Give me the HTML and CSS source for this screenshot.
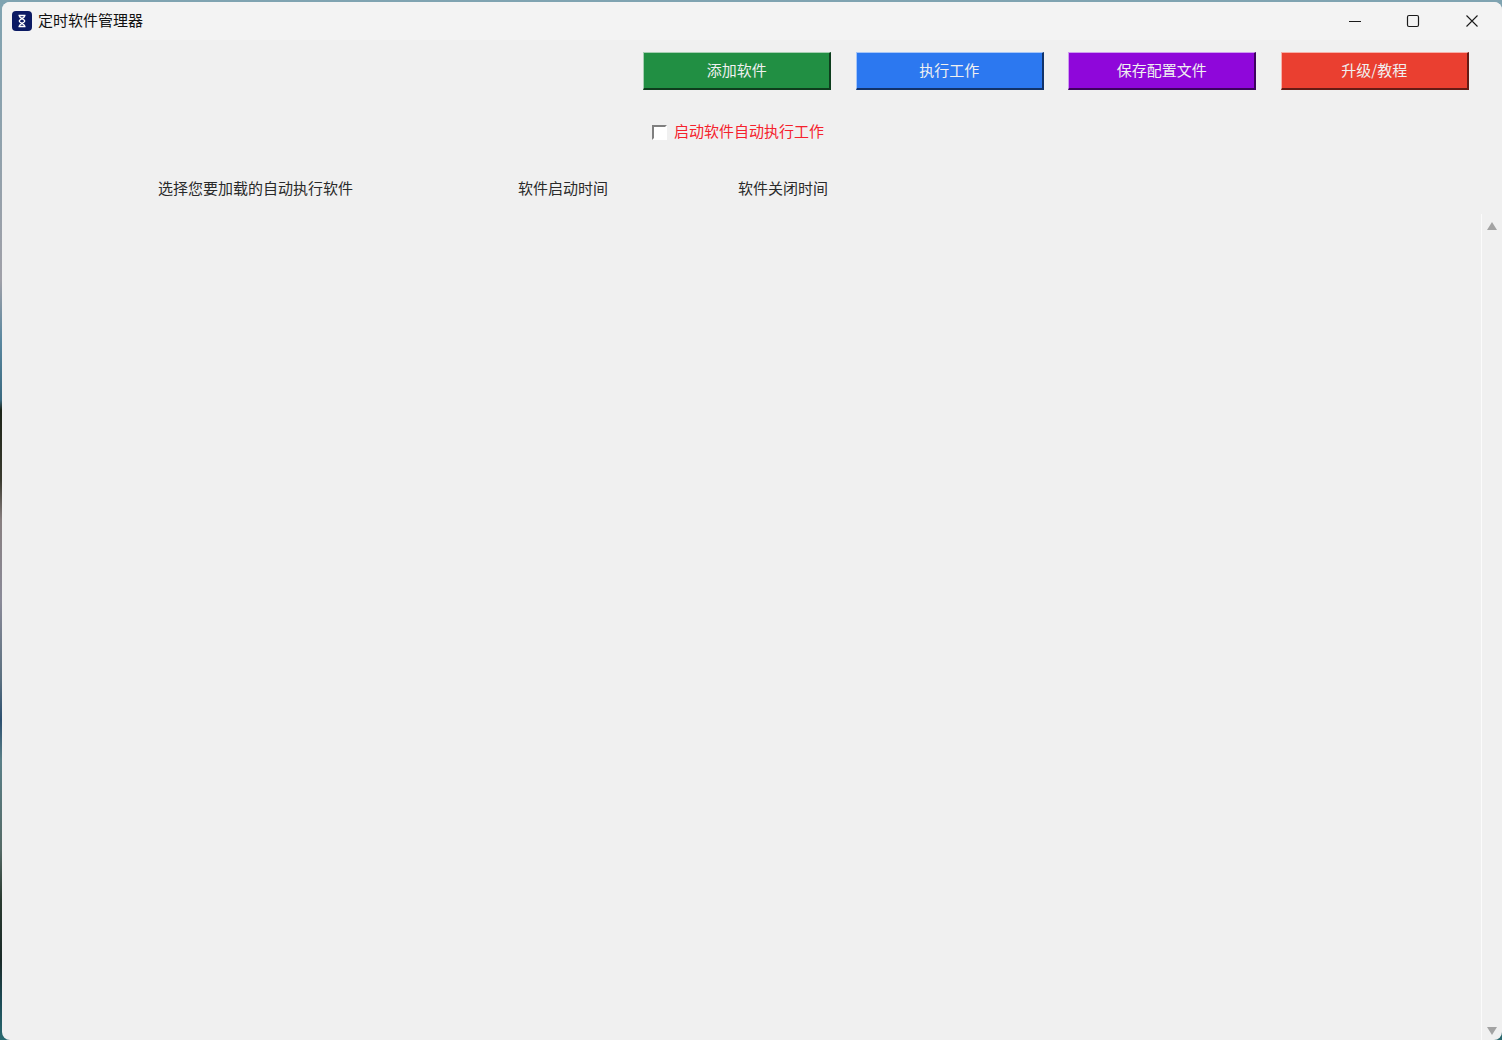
FILE: index.html
```html
<!DOCTYPE html>
<html lang="en">

<head>
    <meta charset="UTF-8">
    <meta name="viewport" content="width=device-width, initial-scale=1.0">
    <title>定时软件管理器</title>
    <link rel="stylesheet" href="styles.css">
</head>

<body>
<div class="window">
    <!-- Title bar -->
    <div class="titlebar">
        <div class="app-icon">
            <svg width="20" height="20" viewBox="0 0 20 20">
                <path d="M6.5 4.5h7M6.5 15.5h7M7.2 4.5c0 3 5.6 3.5 5.6 5.5s-5.6 2.5-5.6 5.5M12.8 4.5c0 3-5.6 3.5-5.6 5.5s5.6 2.5 5.6 5.5" fill="none" stroke="#fff" stroke-width="1.3"/>
            </svg>
        </div>
        <span class="app-title">定时软件管理器</span>
        <div class="win-controls">
            <svg class="win-btn" width="14" height="14" viewBox="0 0 14 14">
                <path d="M1 7.5h12" stroke="#1a1a1a" stroke-width="1" fill="none"/>
            </svg>
            <svg class="win-btn" width="14" height="14" viewBox="0 0 14 14">
                <rect x="1.5" y="1.5" width="11" height="11" rx="1.5" stroke="#1a1a1a" stroke-width="1.2" fill="none"/>
            </svg>
            <svg class="win-btn" width="14" height="14" viewBox="0 0 14 14">
                <path d="M1.5 1.5l11 11M12.5 1.5l-11 11" stroke="#1a1a1a" stroke-width="1.1" fill="none"/>
            </svg>
        </div>
    </div>

    <!-- Action buttons -->
    <div class="toolbar">
        <button class="action green">添加软件</button>
        <button class="action blue">执行工作</button>
        <button class="action purple">保存配置文件</button>
        <button class="action red">升级/教程</button>
    </div>

    <!-- Auto start option -->
    <div class="auto-row">
        <span class="check"></span>
        <span class="auto-label">启动软件自动执行工作</span>
    </div>

    <!-- Column headers -->
    <div class="headers">
        <span class="col-name">选择您要加载的自动执行软件</span>
        <span class="col-start">软件启动时间</span>
        <span class="col-stop">软件关闭时间</span>
    </div>

    <!-- Empty list with scrollbar -->
    <div class="list">
        <div class="list-body"></div>
        <div class="scrollbar">
            <svg width="12" height="8" viewBox="0 0 12 8"><path d="M6 0l5 8H1z" fill="#a3a3a3"/></svg>
            <svg width="12" height="8" viewBox="0 0 12 8"><path d="M1 0h10L6 8z" fill="#a3a3a3"/></svg>
        </div>
    </div>
</div>
</body>

</html>
```

FILE: styles.css
```css
body {
    margin: 0;
    height: 1040px;
    overflow: hidden;
    box-sizing: border-box;
    padding: 2px 0 0 2px;
    font-family: "Noto Sans CJK SC", sans-serif;
    font-size: 15px;
    line-height: 20px;
    color: #1f1f1f;
    background: linear-gradient(to bottom, #7fa3b1 0, #a0a0a8 280px, #5a88a0 340px, #3a6a80 400px, #1c2418 410px, #3a3a2e 480px, #887f80 520px, #8a8a98 600px, #5a7080 680px, #2c5070 720px, #5a8088 760px, #556a66 850px, #2a3a30 900px, #1a2a28 960px, #1c4a55 1000px, #2a6a70 1040px);
}

.window {
    height: 1038px;
    display: flex;
    flex-direction: column;
    background-color: #f0f0f0;
    border-radius: 8px;
    overflow: hidden;
}

.titlebar {
    flex: none;
    height: 38px;
    display: flex;
    align-items: center;
    background-color: #f3f3f3;
    padding-left: 10px;
}

.app-icon {
    width: 20px;
    height: 20px;
    border-radius: 4px;
    background-color: #0b1a63;
}

.app-title {
    margin-left: 6px;
    padding-bottom: 2px;
    color: #111;
}

.win-controls {
    margin-left: auto;
    display: flex;
    gap: 45px;
    padding-right: 23px;
}

.win-btn:first-child {
    margin-right: -1px;
}

.toolbar {
    flex: none;
    display: flex;
    justify-content: flex-end;
    gap: 24.5px;
    padding: 12px 33.25px 0 0;
}

.action {
    width: 188px;
    height: 38px;
    padding: 0 0 2px;
    box-sizing: border-box;
    font-family: inherit;
    font-size: 15px;
    line-height: 20px;
    color: #f0f0f0;
    border-style: solid;
    border-width: 1px 2px 2px 1px;
}

.green {
    background-color: #218f43;
    border-color: #a5cfb2 #0e3d1d #0e3d1d #a5cfb2;
}

.blue {
    background-color: #2c78f0;
    border-color: #a6c6f8 #12336a #12336a #a6c6f8;
}

.purple {
    background-color: #8f07da;
    border-color: #cf9cf0 #3d035e #3d035e #cf9cf0;
}

.red {
    background-color: #ea3f30;
    border-color: #f7b0a9 #651b15 #651b15 #f7b0a9;
}

.auto-row {
    flex: none;
    display: flex;
    align-items: center;
    gap: 7px;
    height: 20px;
    margin-top: 32px;
    padding-left: 650px;
}

.check {
    width: 15px;
    height: 15px;
    box-sizing: border-box;
    background-color: #fff;
    border: 2px solid;
    border-color: #7f7f7f #fff #fff #7f7f7f;
}

.auto-label {
    padding-bottom: 2px;
    color: #f5222d;
}

.headers {
    flex: none;
    display: flex;
    height: 20px;
    margin-top: 36px;
    padding-left: 156px;
    color: #2a2a2a;
}

.col-name {
    width: 360px;
}

.col-start {
    width: 220px;
}

.list {
    flex: 1;
    display: flex;
    margin-top: 16px;
}

.list-body {
    flex: 1;
}

.scrollbar {
    flex: none;
    width: 21px;
    display: flex;
    flex-direction: column;
    justify-content: space-between;
    align-items: center;
    padding: 8px 0 5px;
    box-sizing: border-box;
    border-left: 1px solid #fbfbfb;
}
```
